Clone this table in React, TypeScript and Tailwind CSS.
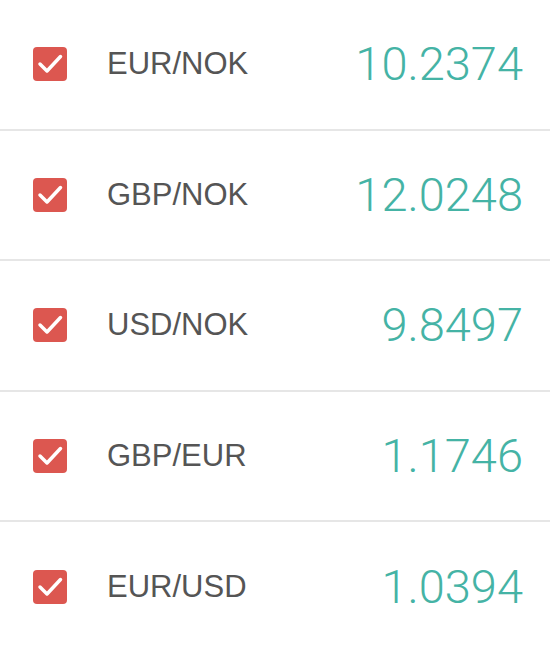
const rates = [
  { pair: "EUR/NOK", value: "10.2374" },
  { pair: "GBP/NOK", value: "12.0248" },
  { pair: "USD/NOK", value: "9.8497" },
  { pair: "GBP/EUR", value: "1.1746" },
  { pair: "EUR/USD", value: "1.0394" },
];

function CheckBox() {
  return (
    <div className="h-[34px] w-[34px] shrink-0 rounded-[4px] bg-[#dc5750]">
      <svg width="34" height="34" viewBox="0 0 34 34" fill="none">
        <path
          d="M7 17l7 7L27.5 9.5"
          stroke="white"
          strokeWidth="3.5"
          strokeLinecap="round"
          strokeLinejoin="round"
        />
      </svg>
    </div>
  );
}

export default function App() {
  return (
    <div className="h-[650px] w-[550px] bg-white font-['Liberation_Sans',Arial,sans-serif]">
      {rates.map((r, i) => (
        <div
          key={r.pair}
          className={`flex h-[130.5px] items-center pl-[33px] pr-[27px] ${
            i < rates.length - 1 ? "border-b-2 border-[#e6e6e6]" : ""
          }`}
        >
          <CheckBox />
          <span className="ml-[40px] text-[31px] text-[#555555]">{r.pair}</span>
          <span className="ml-auto font-['Roboto',sans-serif] text-[47px] font-light text-[#45b3a5]">
            {r.value}
          </span>
        </div>
      ))}
    </div>
  );
}
